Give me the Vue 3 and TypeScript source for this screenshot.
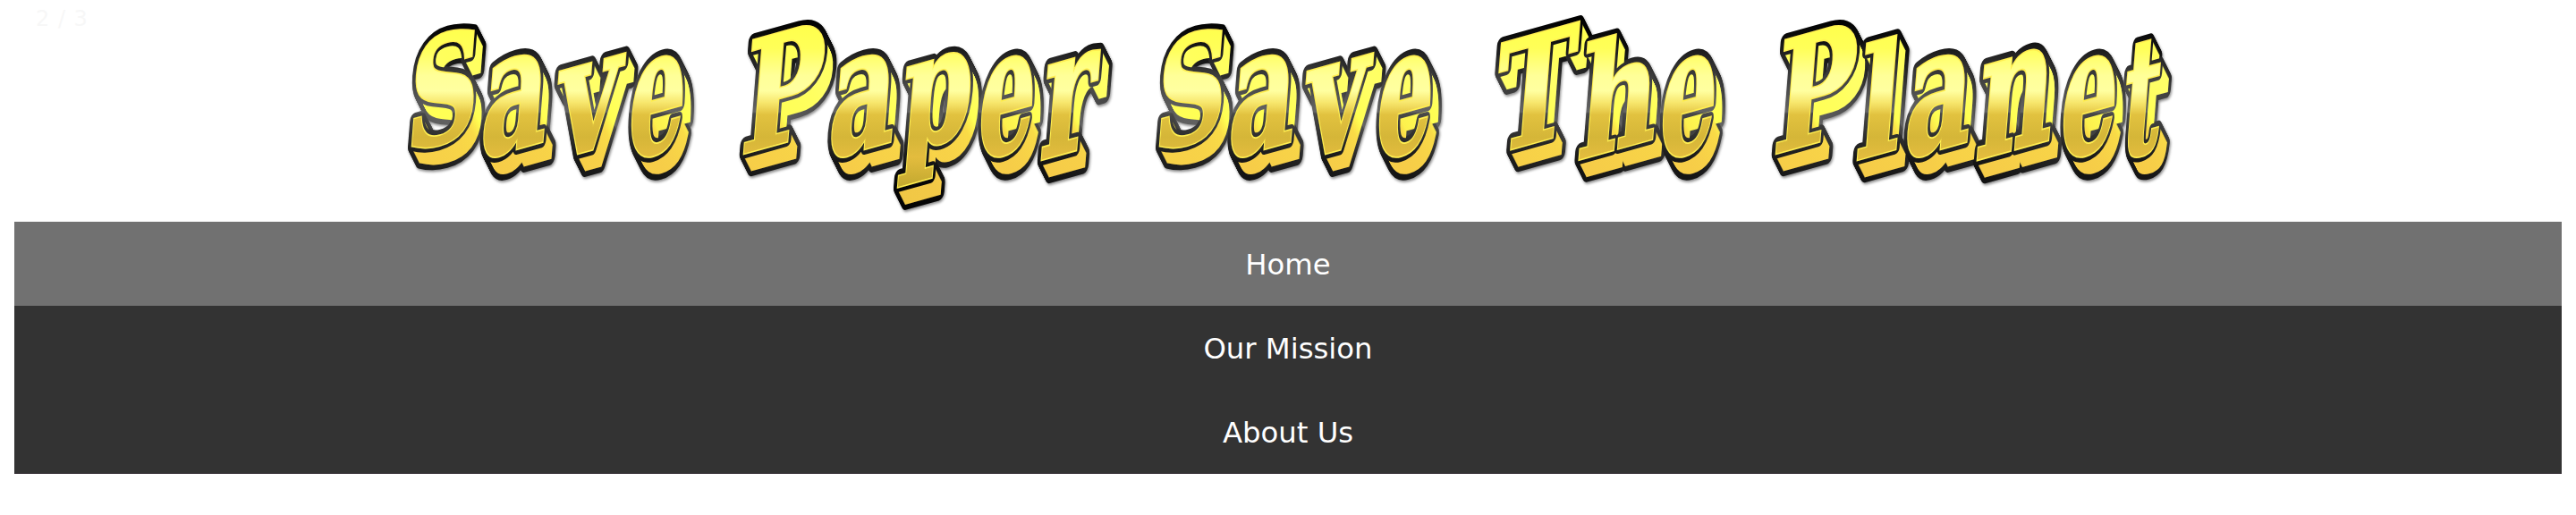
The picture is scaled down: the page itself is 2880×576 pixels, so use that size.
<script setup lang="ts">
interface Letter {
  char: string
  x: number
  y: number
  w: number
  h: number
}

// Each entry gives the lower-left corner and the ink size of a letter's front face.
const letters: Letter[] = [
  { char: 'S', x: 459, y: 171, w: 66, h: 126 },
  { char: 'a', x: 539, y: 179, w: 67, h: 106 },
  { char: 'v', x: 618, y: 180, w: 73, h: 99 },
  { char: 'e', x: 703, y: 181, w: 55, h: 108 },
  { char: 'P', x: 832, y: 171, w: 82, h: 126 },
  { char: 'a', x: 928, y: 179, w: 67, h: 106 },
  { char: 'p', x: 1004, y: 208, w: 73, h: 135 },
  { char: 'e', x: 1094, y: 181, w: 55, h: 108 },
  { char: 'r', x: 1164, y: 178, w: 57, h: 106 },
  { char: 'S', x: 1295, y: 171, w: 66, h: 126 },
  { char: 'a', x: 1375, y: 179, w: 67, h: 106 },
  { char: 'v', x: 1454, y: 180, w: 73, h: 99 },
  { char: 'e', x: 1539, y: 181, w: 55, h: 108 },
  { char: 'T', x: 1669, y: 172, w: 87, h: 122 },
  { char: 'h', x: 1765, y: 178, w: 82, h: 129 },
  { char: 'e', x: 1856, y: 181, w: 55, h: 108 },
  { char: 'P', x: 1986, y: 171, w: 82, h: 126 },
  { char: 'l', x: 2077, y: 178, w: 42, h: 128 },
  { char: 'a', x: 2131, y: 179, w: 67, h: 106 },
  { char: 'n', x: 2211, y: 178, w: 79, h: 106 },
  { char: 'e', x: 2304, y: 181, w: 55, h: 108 },
  { char: 't', x: 2371, y: 180, w: 40, h: 128 },
]

const RISE = 0.28
const LEAN = 0.08
const pen = document.createElement('canvas').getContext('2d')!
pen.font = 'bold 160px "DejaVu Serif"'

const glyphs = letters.map((letter) => {
  const m = pen.measureText(letter.char)
  const left = -m.actualBoundingBoxLeft
  const bottom = m.actualBoundingBoxDescent
  const sx = letter.w / (m.actualBoundingBoxRight - left)
  const sy = letter.h / (m.actualBoundingBoxAscent + bottom)
  const a = sx
  const b = -RISE * sx
  const c = -LEAN * sy
  const d = sy
  const e = letter.x - a * left - c * bottom
  const f = letter.y - b * left - d * bottom
  const det = a * d - b * c
  const inverse = [d / det, -b / det, -c / det, a / det, (c * f - d * e) / det, (b * e - a * f) / det]
  return {
    char: letter.char,
    matrix: `matrix(${[a, b, c, d, e, f].join(' ')})`,
    inverse: `matrix(${inverse.join(' ')})`,
  }
})

const steps = Array.from({ length: 19 }, (_, i) => {
  const t = 18 - i
  return `translate(${t / 2} ${t})`
})

const links = ['Home', 'Our Mission', 'About Us']
</script>

<template>
  <div class="page">
    <header class="banner">
      <span class="counter">2 / 3</span>
      <svg class="logo" viewBox="0 0 2880 248" role="img" aria-label="Save Paper Save The Planet">
        <defs>
          <template v-for="(g, i) in glyphs" :key="i">
            <text :id="`glyph-${i}`" :transform="g.matrix" class="glyph">{{ g.char }}</text>
            <linearGradient :id="`face-${i}`" gradientUnits="userSpaceOnUse" x1="0" y1="20" x2="0" y2="210" :gradientTransform="g.inverse">
              <stop offset="0" stop-color="#ffff48" />
              <stop offset=".18" stop-color="#ffff58" />
              <stop offset=".34" stop-color="#ffff98" />
              <stop offset=".43" stop-color="#ffffa0" />
              <stop offset=".5" stop-color="#f7e66c" />
              <stop offset=".57" stop-color="#e2c23f" />
              <stop offset=".7" stop-color="#d5b638" />
              <stop offset=".82" stop-color="#e3bc3e" />
              <stop offset="1" stop-color="#c1a82f" />
            </linearGradient>
            <linearGradient :id="`edge-${i}`" gradientUnits="userSpaceOnUse" x1="0" y1="20" x2="0" y2="230" :gradientTransform="g.inverse">
              <stop offset="0" stop-color="#000" />
              <stop offset=".1" stop-color="#0c0c0c" />
              <stop offset=".3" stop-color="#3a3a3a" />
              <stop offset=".5" stop-color="#646464" />
              <stop offset=".51" stop-color="#484848" />
              <stop offset=".68" stop-color="#242424" />
              <stop offset=".85" stop-color="#080808" />
              <stop offset="1" stop-color="#000" />
            </linearGradient>
            <linearGradient :id="`side-${i}`" gradientUnits="userSpaceOnUse" x1="0" y1="20" x2="0" y2="230" :gradientTransform="g.inverse">
              <stop offset="0" stop-color="#ffff50" />
              <stop offset=".3" stop-color="#ffff68" />
              <stop offset=".48" stop-color="#ffff52" />
              <stop offset=".56" stop-color="#f9db47" />
              <stop offset=".75" stop-color="#f6cc48" />
              <stop offset="1" stop-color="#edc544" />
            </linearGradient>
          </template>
        </defs>
        <g class="outline">
          <g v-for="(g, i) in glyphs" :key="i" :fill="`url(#edge-${i})`" :stroke="`url(#edge-${i})`">
            <use v-for="s in steps" :key="s" :href="`#glyph-${i}`" :transform="s" />
          </g>
        </g>
        <g v-for="(g, i) in glyphs" :key="i">
          <g class="side" :fill="`url(#side-${i})`" :stroke="`url(#side-${i})`">
            <use v-for="s in steps" :key="s" :href="`#glyph-${i}`" :transform="s" />
          </g>
          <use class="rim" :href="`#glyph-${i}`" :fill="`url(#edge-${i})`" :stroke="`url(#edge-${i})`" />
          <use class="glow" :href="`#glyph-${i}`" />
          <use class="face" :href="`#glyph-${i}`" :fill="`url(#face-${i})`" :stroke="`url(#face-${i})`" />
        </g>
      </svg>
    </header>
    <nav class="menu">
      <a v-for="(link, i) in links" :key="link" class="item" :class="{ active: i === 0 }">{{ link }}</a>
    </nav>
  </div>
</template>

<style>
body {
  margin: 0;
  background: #fff;
}
</style>

<style scoped>
.page {
  padding: 0 16px;
  font-family: Verdana, "DejaVu Sans", sans-serif;
}
.banner {
  position: relative;
  height: 248px;
}
.counter {
  position: absolute;
  left: 24px;
  top: 7px;
  font-size: 24px;
  line-height: 28px;
  letter-spacing: 1px;
  color: #f7f7f7;
}
.logo {
  display: block;
  width: 2880px;
  height: 248px;
  margin-left: -16px;
}
.glyph {
  font: bold 160px "DejaVu Serif", serif;
}
.outline {
  stroke-width: 15px;
  stroke-linejoin: round;
  filter: drop-shadow(1px 2px 1.5px rgba(0, 0, 0, 0.45));
}
.side {
  stroke-width: 4px;
}
.rim {
  stroke-width: 12px;
  stroke-linejoin: round;
}
.glow {
  fill: #ffee50;
  stroke: #ffee50;
  stroke-width: 4px;
}
.face {
  stroke-width: 1px;
}
.menu {
  display: flex;
  flex-direction: column;
  box-sizing: border-box;
  height: 282px;
  background: #333;
  border-bottom: 1px solid #342d34;
}
.item {
  flex: 0 0 94px;
  height: 94px;
  line-height: 96px;
  font-size: 32.3px;
  color: #fff;
  text-align: center;
}
.item:last-child {
  flex-basis: 93px;
}
.active {
  background: #717171;
}
</style>
